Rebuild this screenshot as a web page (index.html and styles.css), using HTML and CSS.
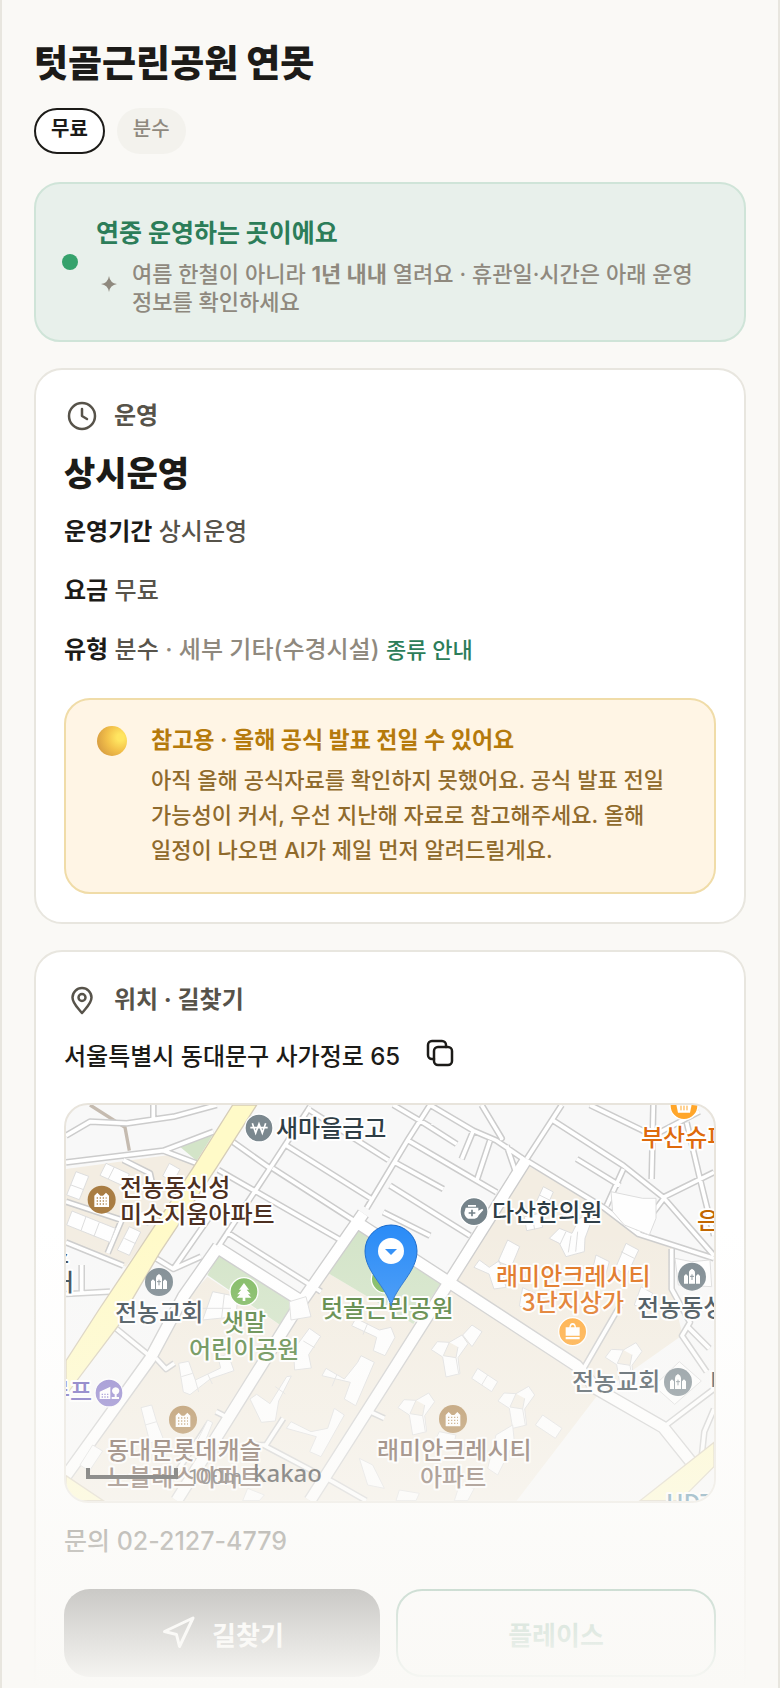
FILE: index.html
```html
<!DOCTYPE html>
<html lang="ko">
  <head>
    <meta charset="UTF-8">
    <meta name="viewport" content="width=device-width, initial-scale=1.0">
    <title>텃골근린공원 연못</title>
    <link rel="stylesheet" href="styles.css">
  </head>
  <body>
    <main class="page">
      <h1>텃골근린공원 연못</h1>
      <div class="chips">
        <span class="chip chip-free">무료</span>
        <span class="chip">분수</span>
      </div>

      <section class="banner">
        <span class="dot"></span>
        <div>
          <h2>연중 운영하는 곳이에요</h2>
          <div class="banner-note">
            <svg class="spark" viewBox="0 0 16 16"><path d="M8 0Q9 7 16 8Q9 9 8 16Q7 9 0 8Q7 7 8 0Z"/></svg>
            <p>여름 한철이 아니라 <b>1년 내내</b> 열려요 · 휴관일·시간은 아래 운영 정보를 확인하세요</p>
          </div>
        </div>
      </section>

      <!-- 운영 정보 -->
      <section class="card">
        <h3 class="card-head">
          <svg class="icon" viewBox="0 0 36 36"><circle cx="18" cy="18" r="13"/><path d="M18 11v7l5 3"/></svg>
          운영
        </h3>
        <p class="status">상시운영</p>
        <p class="row"><b>운영기간</b> 상시운영</p>
        <p class="row"><b>요금</b> 무료</p>
        <p class="row"><b>유형</b> 분수 <span class="sub">· 세부 기타(수경시설)</span> <a href="#types">종류 안내</a></p>
        <div class="notice">
          <span class="ball"></span>
          <div>
            <h4>참고용 · 올해 공식 발표 전일 수 있어요</h4>
            <p>아직 올해 공식자료를 확인하지 못했어요. 공식 발표 전일 가능성이 커서, 우선 지난해 자료로 참고해주세요. 올해 일정이 나오면 AI가 제일 먼저 알려드릴게요.</p>
          </div>
        </div>
      </section>

      <!-- 위치 -->
      <section class="card place">
        <h3 class="card-head">
          <svg class="icon" viewBox="0 0 36 36"><path d="M18 31C14 26 8.500 21.500 8.500 15.500a9.500 9.500 0 0 1 19 0C27.500 21.500 22 26 18 31Z"/><circle cx="18" cy="15.500" r="3.500"/></svg>
          위치 · 길찾기
        </h3>
        <div class="address">
          <span>서울특별시 동대문구 사가정로 65</span>
          <button class="copy" type="button" aria-label="주소 복사">
            <svg viewBox="0 0 28 28"><rect x="8" y="8" width="18" height="18" rx="4"/><path d="M8 20H6a4 4 0 0 1-4-4V6a4 4 0 0 1 4-4h10a4 4 0 0 1 4 4v2"/></svg>
          </button>
        </div>

        <div class="map">
          <svg viewBox="0 0 648 396" preserveAspectRatio="xMidYMid slice">
            <defs>
              <path id="roads" d="M0 92L72 50L182 55L322 35L452 0M262 0V42M0 172L292 137L442 80M292 137L392 175M0 290L167 345L125 445M0 412L172 482M47 480V560M0 567L132 560M172 165L252 205L264 260M500 110L612 190L457 425M732 5L612 190M457 195L832 410M620 190L872 352M662 122L917 282M722 10L967 165M480 380L765 560M442 320L322 492M405 455L322 492L270 460M1062 47L1172 117M982 0L1092 65M1092 0L1222 77L1292 107L1372 162M1027 107L1172 192L1292 262M987 172L1132 252M972 242L1212 392M952 322L1092 392M1222 77L1187 162M1272 107L1232 227M1247 0L1307 100L1302 100M1322 122L1347 195M1462 47L1672 182L1792 277L1944 452M1572 0L1762 92L1900 20M1762 0L1757 222M1382 167L1612 307L1717 387L1944 460M1532 162L1662 242M1672 192L1622 302M1792 282L1717 382M1792 277L1944 202M1862 52L1902 222L1944 392M1817 432V552L1872 652L1848 692L1922 800M1862 662L1930 730M1662 602L1552 792M1792 967L1944 852M1902 1102L1915 980L1944 912M152 672L250 752M270 760L300 792L325 775M450 920L490 940M652 940L600 1020L560 1020M592 1020L800 1130L900 1187M912 920L955 940M432 950L320 1120M1092 0L1027 102L902 310M1487 0L1382 162"/>
              <path id="avenues" d="M1382 162L1152 527L952 842L732 1187M892 325L692 612L492 932L332 1187M457 425L352 575L252 762L0 1112M457 430L712 592M872 352L1142 527L1532 782L1592 852L1792 967L1892 1092"/>
              <path id="wing" d="M0 0l38-22 18 26-30 42 6 48-42 10-10-60-34-22 18-24zM0 0l-18 40 38 6 6-32M20 46l8 48"/>
              <g id="church"><circle r="42"/><path fill="#fff" d="M-24 21V-2l6-6 6 6v23zM12 21V-2l6-6 6 6v23zM-9 21v-33q0-8 9-12q9 4 9 12v33z"/><path d="M0-7V10M-6-1H6" stroke="#828d93" stroke-width="3"/></g>
              <g id="apt"><circle r="42"/><path fill="#fff" d="M-22 22V-12l9-9 9 9h8l9-9 9 9v34z"/><path d="M-15-5h30M-15 4h30M-15 13h30" stroke="#b28a55" stroke-width="4" stroke-dasharray="4 5"/></g>
            </defs>
            <g transform="scale(0.33333)">
              <path fill="#f3ede2" d="M0 192L332 147L392 180L180 485L0 410ZM424 515L650 665L700 600L787 505L1042 657L1152 527L1382 180L1612 307L1717 387L1817 420V560L1850 690L1595 870L1352 1187H0V1112L350 600Z"/>
              <path fill="#f8f8f8" d="M1832 712L1944 620V1187H1352Z"/>
              <path fill="#d3e4c8" d="M332 117L442 87L392 167ZM462 442L705 590L650 665L424 510ZM872 367L1127 532L1042 657L787 505Z"/>
              <path d="M72 0L177 67L190 137" fill="none" stroke="#c5bbb0" stroke-width="10"/>
              <use href="#roads" class="road-edge"/>
              <use href="#avenues" class="avenue-edge"/>
              <use href="#roads" class="road"/>
              <use href="#avenues" class="avenue"/>
              <path class="yellow" d="M500 0H572L452 187L282 442L190 598L157 662L0 870V767L100 612L167 512L382 187ZM0 1112L112 1187H0ZM1722 1187L1944 1012V1085L1842 1187Z"/>
              <g class="building">
                <path d="M120 175l70 32-18 36-70-32zM145 186l-18 36M30 200l38 14-28 70-38-14zM15 240l38 14M18 318l130 52-16 42-130-52zM60 335l-15 42M100 352l-16 42M190 365l34 16-34 70-36-16zM175 400l34 16M310 175l32 18-20 38-32-18zM220 318l40 16-14 28-40-16z"/>
                <path d="M1432 245l30 16-22 50-32-14zM1420 270l32 16M1375 335l45-10 10 42-48 10zM1398 330l8 44"/>
                <path d="M1480 370l38 15 22-45 45-15-28 75-2 40-55 15-20-40-30-15zM1500 380l-18 38M1515 392l-8 50M1535 380l-6 60M1325 405l36 20-25 60-40-15zM1240 465l30 22 30-20 20 80-36 5-15-45-45-20zM1680 415l38 20-35 75-35-20zM1665 440l40 20M1590 450l40 20-12 44-40-14zM1370 548l45 20-15 50-40-15zM1725 545l35 20-20 50-35-15z"/>
                <path d="M1635 260l95 20h40v60l-20 50-75-30-35-40z"/>
                <path d="M1827 460l50 10 55-5 5 80-100-5zM1840 770l66 58-80 70-62-55z"/>
                <path d="M440 560l75 15-5 60-100 10zM475 568l-8 70M405 610h90M670 590l50-15 15 60-60 10z"/>
                <path d="M338 775l30-6 20 56 76-36-8-32 30-10 18 50-70 24-62 48-20-8zM346 815l34-10M388 825l10 36M425 807l14 30"/>
                <path d="M225 908l32-8 15 50 20 52-40 12zM238 960l34-10M395 1005l30-60 15 8-28 70z"/>
                <path d="M730 670l34 24-36 55 8 40-50 6-4-60zM712 708l34 20"/>
                <path d="M662 815l14-2-38 75-10 60-42 4-34-70 20-14 40 28zM628 845l30 22"/>
                <path d="M870 640l70 35 35-8 12 30-30 55-35-15 10-40-75-35zM905 655l-14 34M780 790l55 32 40-50 10-20 40 20-56 130-34-20 18-50-85-20zM812 810l-14 34M675 950l60 30 50-10 20-60 30 20-70 125-34-15 20-45-90-25z"/>
                <use href="#wing" x="1150" y="712"/><use href="#wing" x="1050" y="886"/><use href="#wing" x="1350" y="866"/><use href="#wing" x="1672" y="735"/>
                <path d="M1235 790l60 40-18 30-60-40zM1265 810l-18 30M1430 930l58 40-20 30-60-40zM1190 690l28-30 30 20-30 45z"/>
                <path d="M1120 980l50 10-10 40-60-10zM1290 990l50-30 5 50-50 100-30-20zM880 1060l40 20 35 70-50-10zM1000 1155l60 10-10 22h-60zM1180 1140l45 10-20 37h-40zM545 1150l50 20-15 17h-50z"/>
                <path d="M80 1020l30 18-40 60-28-18z"/>
              </g>

              <g class="badges">
                <g transform="translate(579 69)" fill="#7b888f"><circle r="42"/><path d="M-20-14L-10 15L0-12L10 15L20-14M-26-1H26" fill="none" stroke="#fff" stroke-width="5"/></g>
                <use href="#apt" x="107" y="284" fill="#a97d43"/>
                <use href="#church" x="279" y="531" fill="#7b888f"/>
                <g transform="translate(534 560)" fill="#7cb85d"><circle r="42"/><path fill="#fff" d="M0-26l15 20h-7l12 14h-8l10 10H4v10h-8v-10h-18l10-10h-8l12-14h-7z"/></g>
                <circle cx="958" cy="522" r="42" fill="#7cb85d"/>
                <g transform="translate(1224 320)" fill="#75838a"><circle r="42"/><path fill="#fff" d="M-18-20h24v5h-24zM-25-12h38v9l12-6 3 4-14 16q-4 10-12 10h-20q-11-7-11-18z"/><path d="M-6-6V14M-16 4H4" stroke="#75838a" stroke-width="5"/></g>
                <g transform="translate(1854 2)" fill="#ffa62b"><circle r="42"/><path fill="#fff" d="M-24-8h48l-6 29h-36z"/><path d="M-9 0v14M0 0v14M9 0v14" stroke="#ffa62b" stroke-width="3"/></g>
                <use href="#church" x="1878" y="515" fill="#7b888f"/>
                <g transform="translate(1520 680)" fill="#ffa733"><circle r="42"/><path fill="#fff" d="M-21-13h11q1-13 10-13t10 13h11v25h-42zM-21 16h42v7h-42z"/><path d="M-6-13q1-8 6-8t6 8z"/></g>
                <use href="#church" x="1836" y="831" fill="#7b888f"/>
                <use href="#apt" x="351" y="944" fill="#a97d43"/>
                <use href="#apt" x="1161" y="942" fill="#a97d43"/>
                <g transform="translate(129 864)" fill="#8577c9"><circle r="42"/><path fill="#fff" d="M-28 18v-22l32-15v37zM8 18V12h9V4a11 11 0 1 1 6 0v8h7v6z"/><path d="M-22 4h22M-22 12h22" stroke="#8577c9" stroke-width="4" stroke-dasharray="4 4"/></g>
              </g>
            </g>

            <g class="labels">
              <text x="210" y="32" fill="#2f3e46">새마을금고</text>
              <text x="54" y="91" fill="#4e3021">전농동신성</text>
              <text x="54" y="118" fill="#4e3021">미소지움아파트</text>
              <text x="426" y="116" fill="#2f3e46">다산한의원</text>
              <text x="575" y="41" fill="#de6a0c">부산슈퍼</text>
              <text x="631" y="124" fill="#c26700">은행</text>
              <text x="430" y="180" fill="#e0711a">래미안크레시티</text>
              <text x="456" y="206" fill="#e0711a">3단지상가</text>
              <text x="571" y="211" fill="#36444c">전농동성당</text>
              <text x="49" y="216" fill="#36444c">전농교회</text>
              <text x="156" y="226" fill="#4d7d35">샛말</text>
              <text x="123" y="253" fill="#4d7d35">어린이공원</text>
              <text x="255" y="212" fill="#4d7d35">텃골근린공원</text>
              <text x="506" y="285" fill="#36444c">전농교회</text>
              <text x="644" y="285" fill="#36444c">미</text>
              <text x="41" y="354" fill="#5c4132">동대문롯데캐슬</text>
              <text x="41" y="381" fill="#5c4132">노블레스아파트</text>
              <text x="311" y="354" fill="#5c4132">래미안크레시티</text>
              <text x="354" y="381" fill="#5c4132">아파트</text>
              <text x="-18" y="295" fill="#6658b8">루프</text>
              <text x="-14" y="186" fill="#36444c">거</text>
              <text x="-19" y="158" fill="#36444c">스</text>
              <text x="600" y="407" fill="#3e7c9b">UDT</text>
            </g>

            <!-- 현재 장소 핀 -->
            <path d="M325 201C320 181 299 167 299 146a26 26 0 0 1 52 0C351 167 330 181 325 201Z" fill="#2b8cf7" stroke="#1769cc"/>
            <circle cx="325" cy="146" r="13" fill="#fff"/>
            <path d="M319 144h12l-6 6z" fill="#2b8cf7"/>

            <path d="M22 363v9h88v-9" fill="none" stroke="#111" stroke-width="4"/>
            <text class="scale" x="122" y="379">100m</text>
            <text class="brand" x="187" y="377">kakao</text>
          </svg>
        </div>

        <p class="row contact">문의 02-2127-4779</p>
        <div class="actions">
          <button class="btn btn-dark" type="button">
            <svg viewBox="0 0 24 24"><path d="M3 11L22 2L13 21L11 13Z"/></svg>
            길찾기
          </button>
          <button class="btn btn-line" type="button">플레이스</button>
        </div>
      </section>
      <div class="fade"></div>
    </main>
  </body>
</html>
```

FILE: styles.css
```css
* {
  box-sizing: border-box;
}

body {
  margin: 0;
  background-color: #faf9f6;
  color: #1c1b18;
  font-family: Inter, "Noto Sans CJK KR", sans-serif;
  font-size: 24px;
  font-weight: 500;
  word-break: keep-all;
}

h1, h2, h3, h4, p {
  margin: 0;
}

.page {
  position: relative;
  height: 100vh;
  overflow: hidden;
  padding: 38px 32px 0;
  border-left: 2px solid #e8e6df;
  border-right: 2px solid #e8e6df;
}

h1 {
  font-size: 37px;
  line-height: 52px;
  font-weight: 800;
}

.chips {
  display: flex;
  gap: 12px;
  margin: 18px 0 28px;
}

.chip {
  height: 46px;
  padding: 0 16px;
  border-radius: 23px;
  background-color: #f3f2ed;
  color: #8f897e;
  font-size: 20px;
  line-height: 42px;
}

.chip-free {
  padding: 0 15px;
  border: 2px solid #1c1b18;
  background-color: #fff;
  color: #1c1b18;
  line-height: 38px;
  font-weight: 700;
}

.banner {
  display: flex;
  align-items: center;
  gap: 18px;
  padding: 31px 26px 24px;
  border: 2px solid #cfe4d8;
  border-radius: 26px;
  background-color: #e8f0eb;
}

.dot {
  flex: none;
  width: 16px;
  height: 16px;
  margin-bottom: 8px;
  border-radius: 50%;
  background-color: #36a26c;
}

.banner h2 {
  margin-bottom: 9px;
  color: #2c7d59;
  font-size: 25px;
  line-height: 36px;
  font-weight: 700;
}

.banner-note {
  display: flex;
  gap: 15px;
  color: #8f897e;
  font-size: 22px;
  line-height: 28px;
}

.spark {
  flex: none;
  width: 16px;
  height: 16px;
  margin: 16px 0 0 5px;
  fill: #8f897e;
}

.card {
  margin-top: 26px;
  padding: 28px;
  border: 2px solid #e8e6df;
  border-radius: 28px;
  background-color: #fff;
}

.place {
  padding-top: 30px;
}

.card-head {
  display: flex;
  align-items: center;
  gap: 14px;
  color: #57534a;
  font-size: 24px;
  line-height: 36px;
  font-weight: 700;
}

.icon {
  width: 36px;
  height: 36px;
  fill: none;
  stroke: #57534a;
  stroke-width: 2.5;
  stroke-linecap: round;
  stroke-linejoin: round;
}

.status {
  margin: 16px 0 14px;
  font-size: 34px;
  line-height: 48px;
  font-weight: 800;
}

.row {
  color: #57534a;
  line-height: 40px;
}

.row + .row {
  margin-top: 19px;
}

.row b {
  color: #1c1b18;
}

.row .sub {
  color: #8f897e;
}

.row a {
  color: #2c7d59;
  font-size: 22px;
  text-decoration: none;
}

.notice {
  display: flex;
  gap: 24px;
  margin-top: 28px;
  padding: 22px 26px 24px 31px;
  border: 2px solid #f0dca8;
  border-radius: 26px;
  background-color: #fff5e5;
}

.ball {
  flex: none;
  width: 30px;
  height: 30px;
  margin-top: 4px;
  border-radius: 50%;
  background: radial-gradient(circle at 78% 38%, #ffe560 12%, #f3c14a 45%, #d99f42 80%, #d0805a 100%);
}

.notice h4 {
  margin-bottom: 5px;
  color: #b57a0c;
  font-size: 23px;
  line-height: 36px;
  font-weight: 700;
}

.notice p {
  color: #8f6a2c;
  font-size: 22px;
  line-height: 35px;
}

.address {
  display: flex;
  align-items: center;
  gap: 26px;
  margin: 19px 0 26px;
  font-size: 24px;
  line-height: 40px;
}

.copy {
  padding: 0;
  border: none;
  background: none;
  line-height: 0;
  cursor: pointer;
}

.copy svg {
  width: 28px;
  height: 28px;
  margin-bottom: 8px;
  fill: none;
  stroke: #1c1b18;
  stroke-width: 2.5;
  stroke-linecap: round;
}

.map {
  height: 400px;
  overflow: hidden;
  border: 2px solid #e8e4dc;
  border-radius: 24px;
  background-color: #f8f8f8;
}

.map svg {
  display: block;
  width: 100%;
  height: 100%;
}

.road-edge, .avenue-edge, .road, .avenue {
  fill: none;
  stroke: #ccc;
  stroke-width: 20;
  stroke-linejoin: round;
}

.road {
  stroke: #fff;
  stroke-width: 11;
}

.avenue-edge {
  stroke-width: 40;
}

.avenue {
  stroke: #fff;
  stroke-width: 32;
}

.yellow {
  fill: #fffac8;
  stroke: #d6cdb8;
  stroke-width: 4;
}

.building {
  fill: #fefefe;
  stroke: #ddd;
  stroke-width: 3;
}

.badges circle {
  stroke: #fff;
  stroke-width: 4;
}

.labels text {
  font-family: "Noto Sans CJK KR", sans-serif;
  font-size: 24px;
  font-weight: 500;
  stroke: #fff;
  stroke-width: 4px;
  stroke-linejoin: round;
  paint-order: stroke;
}

.scale {
  fill: #333;
  font-family: Roboto, sans-serif;
  font-size: 21px;
  font-weight: 400;
}

.brand {
  fill: #111;
  font-family: "Noto Sans", sans-serif;
  font-size: 24px;
}

.contact {
  margin: 18px 0 28px;
  font-size: 25px;
}

.actions {
  display: flex;
  gap: 16px;
}

.btn {
  display: flex;
  flex: 1;
  align-items: center;
  justify-content: center;
  gap: 16px;
  height: 88px;
  border: none;
  border-radius: 26px;
  font-family: inherit;
  font-size: 26px;
  font-weight: 700;
  cursor: pointer;
}

.btn svg {
  width: 36px;
  height: 36px;
  fill: none;
  stroke: #fff;
  stroke-width: 2;
  stroke-linejoin: round;
}

.btn-dark {
  background-color: #1c1b18;
  color: #fff;
}

.btn-line {
  border: 2px solid #2c7d59;
  background-color: #fff;
  color: #2c7d59;
}

/* 화면 아래쪽으로 흐려지는 효과 */
.fade {
  position: absolute;
  right: 0;
  bottom: 0;
  left: 0;
  height: 460px;
  background: linear-gradient(rgba(250, 249, 246, 0), #faf9f6);
  pointer-events: none;
}
```
